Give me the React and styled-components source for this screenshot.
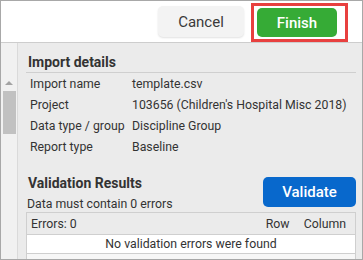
import React from 'react';
import styled, { createGlobalStyle } from 'styled-components';

const GlobalStyle = createGlobalStyle`
  html, body { margin: 0; padding: 0; background: #fff; }
  body { font-family: Roboto, "Liberation Sans", sans-serif; }
`;

const Frame = styled.div`
  width: 363px;
  height: 260px;
  box-sizing: border-box;
  border: 1px solid #a8a8a8;
  display: flex;
  flex-direction: column;
  overflow: hidden;
  background: #ebebeb;
`;

const Header = styled.div`
  height: 42px;
  flex: none;
  box-sizing: border-box;
  background: #fff;
  border-bottom: 1px solid #cdcdcd;
  display: flex;
  align-items: flex-start;
  justify-content: flex-end;
  padding: 2px 14px 0 0;
  gap: 7px;
`;

const CancelButton = styled.button`
  margin-top: 3px;
  width: 86px;
  height: 31px;
  border: none;
  border-radius: 5px;
  background: #f3f3f3;
  box-shadow: 0 1px 2px rgba(0, 0, 0, 0.12);
  color: #3a3a3a;
  font-family: Roboto, sans-serif;
  font-size: 15px;
`;

const Highlight = styled.div`
  border: 3px solid #e8403f;
  padding: 2px 8px 3px 3px;
  height: 39px;
  box-sizing: border-box;
`;

const FinishButton = styled.button`
  width: 80px;
  height: 29px;
  border: none;
  border-radius: 5px;
  background: #36ab36;
  color: #fff;
  font-family: Roboto, sans-serif;
  font-size: 15px;
  font-weight: 500;
`;

const Body = styled.div`
  flex: 1;
  display: flex;
  min-height: 0;
`;

const Scrollbar = styled.div`
  width: 16px;
  flex: none;
  background: #f1f1f1;
  border-right: 1px solid #dadada;
  display: flex;
  flex-direction: column;
  align-items: center;
  padding-top: 38px;
`;

const Arrow = styled.div`
  width: 0;
  height: 0;
  border-left: 4px solid transparent;
  border-right: 4px solid transparent;
  border-bottom: 4px solid #a3a3a3;
`;

const Thumb = styled.div`
  margin-top: 6px;
  width: 13px;
  height: 43px;
  background: #c1c1c1;
`;

const Content = styled.div`
  flex: 1;
  padding: 11px 6px 0 8px;
  color: #333;
`;

const SectionTitle = styled.div`
  font-size: 14px;
  font-weight: 700;
  color: #333;
  padding: 0 0 2px 2px;
  ${p => p.$rule && 'border-bottom: 1px solid #cfcfcf;'}
`;

const DetailsGrid = styled.div`
  display: grid;
  grid-template-columns: 102px 1fr;
  grid-auto-rows: 21px;
  align-items: center;
  padding: 0 0 0 4px;
  font-size: 12.3px;
  white-space: nowrap;
`;

const ValidationHead = styled.div`
  margin-top: 18px;
  display: flex;
  justify-content: space-between;
  align-items: flex-start;
`;

const Note = styled.div`
  font-size: 12.3px;
  padding: 4px 0 0 1px;
`;

const ValidateButton = styled.button`
  width: 93px;
  height: 30px;
  margin-top: 2px;
  border: none;
  border-radius: 5px;
  background: #0868cc;
  color: #fff;
  font-family: Roboto, sans-serif;
  font-size: 15px;
  font-weight: 500;
`;

const Table = styled.div`
  margin-top: 1px;
  border: 1px solid #cfcfcf;
  font-size: 12.3px;
`;

const HeadRow = styled.div`
  height: 21px;
  display: flex;
  align-items: center;
  padding: 0 9px 0 4px;
  border-bottom: 1px solid #cfcfcf;
  gap: 14px;
`;

const Grow = styled.span`
  flex: 1;
`;

const EmptyRow = styled.div`
  height: 18px;
  background: #fff;
  display: flex;
  align-items: center;
  justify-content: center;
`;

const Tail = styled.div`
  height: 8px;
  background: #f7f7f7;
  border-top: 1px solid #cfcfcf;
`;

const details = [
  ['Import name', 'template.csv'],
  ['Project', "103656 (Children's Hospital Misc 2018)"],
  ['Data type / group', 'Discipline Group'],
  ['Report type', 'Baseline'],
];

export default function App() {
  return (
    <>
      <GlobalStyle />
      <Frame>
        <Header>
          <CancelButton>Cancel</CancelButton>
          <Highlight>
            <FinishButton>Finish</FinishButton>
          </Highlight>
        </Header>
        <Body>
          <Scrollbar>
            <Arrow />
            <Thumb />
          </Scrollbar>
          <Content>
            <SectionTitle $rule>Import details</SectionTitle>
            <DetailsGrid>
              {details.map(([k, v]) => (
                <React.Fragment key={k}>
                  <span>{k}</span>
                  <span>{v}</span>
                </React.Fragment>
              ))}
            </DetailsGrid>
            <ValidationHead>
              <div>
                <SectionTitle>Validation Results</SectionTitle>
                <Note>Data must contain 0 errors</Note>
              </div>
              <ValidateButton>Validate</ValidateButton>
            </ValidationHead>
            <Table>
              <HeadRow>
                <Grow>Errors: 0</Grow>
                <span>Row</span>
                <span>Column</span>
              </HeadRow>
              <EmptyRow>No validation errors were found</EmptyRow>
              <Tail />
            </Table>
          </Content>
        </Body>
      </Frame>
    </>
  );
}
